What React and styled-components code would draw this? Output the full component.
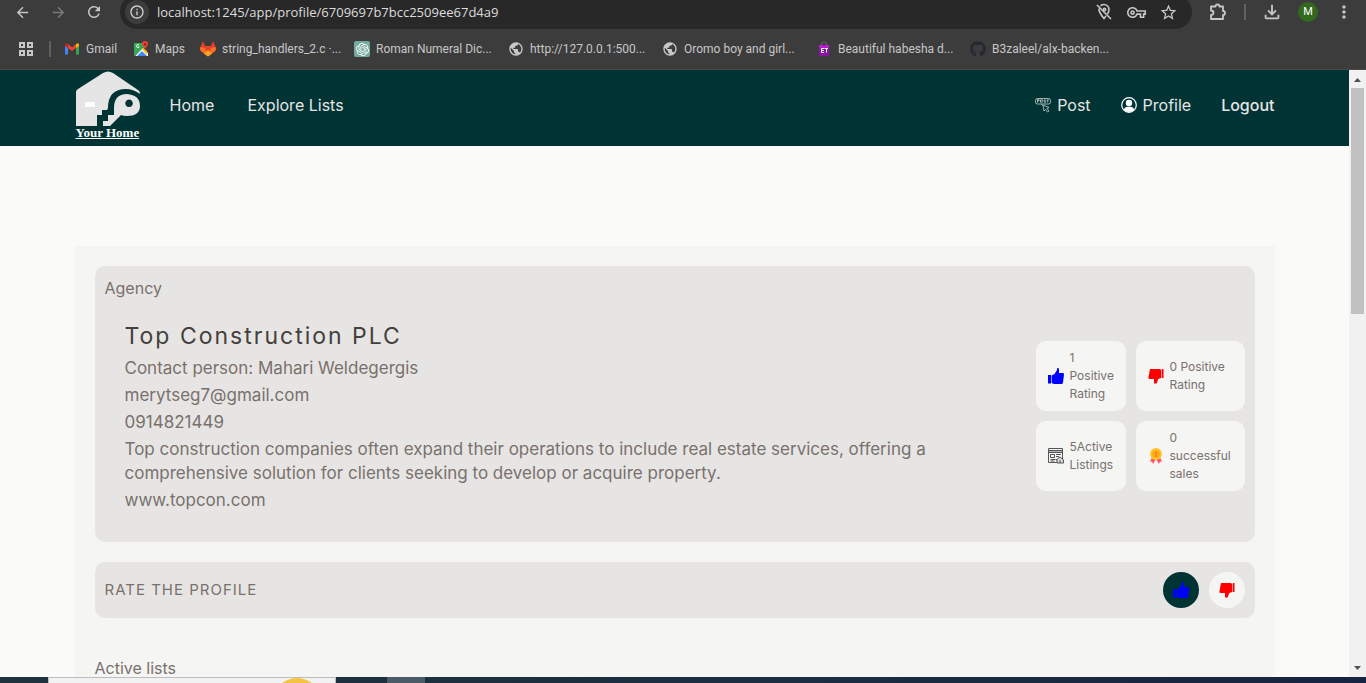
import React from 'react';
import styled, { createGlobalStyle } from 'styled-components';
import { MdArrowBack, MdArrowForward, MdRefresh, MdInfoOutline, MdOutlineVpnKey, MdStarOutline, MdOutlineFileDownload, MdMoreVert, MdPublic } from 'react-icons/md';
import { FaGithub } from 'react-icons/fa';
import { SiOpenai } from 'react-icons/si';

const GlobalStyle = createGlobalStyle`
  * { box-sizing: border-box; }
  body { margin: 0; overflow: hidden; background: #fafaf9; }
  button, input { font: inherit; }
  a { color: inherit; text-decoration: none; }
  h1, h2, p { margin: 0; font-weight: 400; }
  svg { display: block; flex: none; }
`;

const Screen = styled.div`
  height: 100vh;
  display: flex;
  flex-direction: column;
  font-family: Inter, "Liberation Sans", sans-serif;
  font-size: 16px;
  line-height: 24px;
  color: #78716c;
`;

const Chrome = styled.header`
  flex: none;
  background: #3c3c3c;
  color: #c7c7c7;
  border-bottom: 1px solid #4a4a4a;
  font-family: "Open Sans", "Noto Sans", sans-serif;
  font-size: 12px;
`;

const Toolbar = styled.div`
  height: 29px;
  overflow: hidden;
  display: flex;
  align-items: flex-end;
  padding: 0 4px 0 12px;
`;

const IconButton = styled.button`
  height: 34px;
  width: ${(p) => p.$width || 36}px;
  flex: none;
  padding: 0;
  border: 0;
  background: none;
  color: ${(p) => (p.$dim ? '#7c7c7c' : '#c7c7c7')};
  display: flex;
  align-items: center;
  justify-content: center;
`;

const AddressBar = styled.div`
  flex: 1;
  height: 34px;
  display: flex;
  align-items: center;
  margin: 0 8px 0 16px;
  padding: 0 8px 0 5px;
  background: #282828;
  border-radius: 17px;
`;

const SiteInfo = styled.button`
  width: 24px;
  height: 24px;
  padding: 0;
  border: 0;
  border-radius: 50%;
  background: #3c3c3c;
  color: #d0d0d0;
  display: flex;
  align-items: center;
  justify-content: center;
`;

const Address = styled.input`
  flex: 1;
  min-width: 0;
  margin-left: 8px;
  padding: 0;
  border: 0;
  outline: 0;
  background: none;
  color: #dcdcdc;
  font-size: 13px;
`;

const SeparatorSlot = styled.span`
  width: ${(p) => p.$width}px;
  height: 34px;
  display: flex;
  align-items: center;
  justify-content: center;
`;

const Separator = styled.span`
  width: 2px;
  height: 16px;
  background: #606060;
`;

const Avatar = styled.span`
  width: 20px;
  height: 20px;
  border-radius: 50%;
  background: #33691e;
  color: #fff;
  font: 11px/20px Roboto, sans-serif;
  text-align: center;
`;

const Bookmarks = styled.nav`
  height: 40px;
  display: flex;
  align-items: center;
  padding: 0 16px;
  font-family: Roboto, "Open Sans", sans-serif;
`;

const Bookmark = styled.a`
  display: flex;
  align-items: center;
  gap: 6px;
  width: ${(p) => p.$width}px;
  white-space: nowrap;
`;

const Viewport = styled.div`
  flex: 1;
  min-height: 0;
  display: flex;
`;

const Page = styled.div`
  flex: 1;
  min-width: 0;
  overflow: hidden;
  background: #fafaf9;
`;

const Scrollbar = styled.div`
  width: 17px;
  flex: none;
  display: flex;
  flex-direction: column;
  align-items: center;
  background: #f1f1f1;
`;

const ScrollArrow = styled.button`
  width: 17px;
  height: 18px;
  padding: 0;
  border: 0;
  background: none;
  display: flex;
  align-items: center;
  justify-content: center;
`;

const Thumb = styled.div`
  width: 13px;
  flex: 226;
  background: #c1c1c1;
`;

const Track = styled.div`
  flex: 345;
`;

const SiteHeader = styled.header`
  background: #003333;
  color: #e7e5e4;
`;

const Container = styled.div`
  max-width: 1200px;
  margin: 0 auto;
`;

const NavRow = styled(Container)`
  height: 76px;
  display: flex;
  align-items: center;
  gap: 30px;
  padding-bottom: 6px;
`;

const NavLink = styled.a`
  display: flex;
  align-items: center;
  gap: 6px;
  min-width: 48px;
  margin-left: ${(p) => (p.$push ? 'auto' : '0')};
`;

const Logo = styled.a`
  width: 65px;
  padding-left: 1px;
  font: bold 13px/13px "Liberation Serif", serif;
  text-decoration: underline;
  color: #fff;
  white-space: nowrap;
`;

const Logout = styled.button`
  padding: 0;
  border: 0;
  background: none;
  color: inherit;
  font-weight: 500;
`;

const Profile = styled(Container).attrs({ as: 'main' })`
  margin-top: 100px;
  padding: 20px;
  min-height: 900px;
  background: #f5f5f4;
`;

const Card = styled.section`
  margin-bottom: 20px;
  padding: 10px;
  border-radius: 10px;
  background: #e7e5e4;
`;

const AgencyBody = styled.div`
  display: flex;
  align-items: center;
`;

const Details = styled.div`
  flex: 1;
  display: flex;
  flex-direction: column;
  gap: 3px;
  padding: 20px;
  font-size: 17px;
`;

const Title = styled.h1`
  font-size: 23px;
  line-height: 33px;
  letter-spacing: 2px;
  color: #44403c;
`;

const Description = styled.p`
  max-width: 820px;
`;

const Stats = styled.div`
  display: grid;
  grid-template-columns: 90px 109px;
  grid-auto-rows: 70px;
  gap: 10px;
`;

const Stat = styled.div`
  display: flex;
  align-items: center;
  gap: 6px;
  padding-left: 12px;
  border-radius: 10px;
  background: #f5f5f4;
  font-size: 12px;
  line-height: 18px;
`;

const StatLine = styled.span`
  display: block;
  white-space: nowrap;
`;

const RateCard = styled(Card)`
  display: flex;
  align-items: center;
  gap: 10px;
`;

const RateTitle = styled.h2`
  flex: 1;
  font-size: 15px;
  letter-spacing: 1px;
`;

const RateButton = styled.button`
  width: 36px;
  height: 36px;
  padding: 0;
  border: 0;
  border-radius: 50%;
  background: ${(p) => (p.$active ? '#003333' : '#f5f5f4')};
  display: flex;
  align-items: center;
  justify-content: center;
`;

const ListHeading = styled.h2`
  margin-top: 40px;
  font-size: 16px;
  line-height: 20px;
`;

const Taskbar = styled.footer`
  height: 6px;
  flex: none;
  display: flex;
  padding-left: 48px;
  overflow: hidden;
  background: linear-gradient(90deg, #1e333c, #1b2d40 60%, #172440);
`;

const SearchBox = styled.div`
  width: 288px;
  padding-left: 232px;
  border: 1px solid #bdbdbd;
  border-bottom: 0;
  background: #f2f2f2;
`;

const ActiveTask = styled.div`
  width: 38px;
  margin-left: 51px;
  background: #4c5c66;
`;

const ThumbUp = () => (
  <svg width="16" height="16" viewBox="0 0 16 16" fill="#0000ff">
    <path d="M0 7h3v8.500H0zM3.600 7.500 6.500 6 9 2V.7Q9 0 9.800 0 11 0 11 1.400V5h3.800Q16 5 16 6.400L15 14.500Q14.800 16 13.500 16H6l-2.400-1z" />
  </svg>
);

const ThumbDown = () => (
  <svg width="16" height="16" viewBox="0 0 16 16" fill="#ff0000">
    <path d="M13.800 1h1.700v9h-1.700zM2 1h9.500l1.700.7V10l-3 1-1.500 4.500H6V11H1.500Q.4 11 .4 9.500z" />
  </svg>
);

const Gmail = () => (
  <svg width="16" height="16" viewBox="0 0 16 16">
    <path fill="#4285f4" d="M1 4v9.500h3V7z" /><path fill="#34a853" d="M15 4v9.500h-3V7z" />
    <path fill="#ea4335" d="m4 7 4 3 4-3V3.200L8 6.300 4 3.200z" />
    <path fill="#c5221f" d="M1 4q0-2.200 2-1.500l1 .7V7L1 5z" /><path fill="#fbbc04" d="M15 4q0-2.200-2-1.500l-1 .7V7l3-2z" />
  </svg>
);

const Maps = () => (
  <svg width="16" height="16" viewBox="0 0 16 16">
    <path fill="#34a853" d="M1 2h11v4L1 15z" /><path fill="#fff" d="m2 15 8-8 5 5v3z" />
    <path fill="#4285f4" d="m4 15 5-5 5 5z" /><path fill="#fbbc04" d="m9 8 1-1 4 3v4z" />
    <path stroke="#fff" fill="none" d="M6 4a1.500 1.500 0 1 0 .2 2H5" />
    <path fill="#ea4335" d="M12 0a3 3 0 0 1 3 3c0 2-2.500 3-3 6-.500-3-3-4-3-6a3 3 0 0 1 3-3z" /><circle cx="12" cy="3.300" r="1.100" fill="#811" />
  </svg>
);

const Gitlab = () => (
  <svg width="16" height="16" viewBox="0 0 16 16">
    <path fill="#e24329" d="M3 0 0 7l8 8 8-8-3-7-2 5H5z" />
    <path fill="#fc6d26" d="M.5 6Q-1 9 2 11l6 4.500-3-8Q3 6 .5 6zM15.500 6q1.500 3-1.500 5l-6 4.500 3-8Q13 6 15.500 6z" />
    <path fill="#fca326" d="m4 12.500 4-3.500 4 3.500-4 3z" />
  </svg>
);

const AiTile = styled.span`
  width: 16px;
  height: 16px;
  border-radius: 2px;
  background: #74aa9c;
  color: #fff;
  display: flex;
  align-items: center;
  justify-content: center;
`;

const Bag = () => (
  <svg width="16" height="16" viewBox="0 0 16 16">
    <path fill="none" stroke="#666" d="M5 4q0-3 3-3t3 3" /><path fill="#8e12a8" d="M3 4h10v11H3z" /><path fill="#b51bd0" d="M3 4h10v3H3z" />
    <path stroke="#fff" fill="none" d="M8 7.500H5.500v4H8M5.500 9.500H8M8.500 7.500H12M10.500 7.500v4" />
  </svg>
);

const AppsGrid = () => (
  <svg width="16" height="16" viewBox="0 0 16 16" fill="none" stroke="#c7c7c7" strokeWidth="2">
    <path d="M2 2h4v4H2zM10 2h4v4h-4zM2 10h4v4H2zM10 10h4v4h-4z" />
  </svg>
);

const Puzzle = () => (
  <svg width="18" height="18" viewBox="0 0 18 18" fill="none" stroke="#c7c7c7" strokeWidth="1.800" strokeLinejoin="round">
    <path d="M2 3.500h4.500q0-2 2-2t2 2H14V8q2 0 2 2t-2 2v4H2v-4q2.500 0 2.500-2.200T2 7.500z" />
  </svg>
);

const LocationOff = () => (
  <svg width="18" height="18" viewBox="0 0 18 18" fill="none" stroke="#c7c7c7" strokeWidth="1.600">
    <path d="M2 2l14 14M5.500 2.800Q7 1.500 9 1.500a5 5 0 0 1 5 5q0 2-1.500 4.500M4 5.500Q3.500 9 9 15.500l2-2.500" /><circle cx="9.500" cy="6.500" r="1.200" />
  </svg>
);

const House = () => (
  <svg width="64" height="55" viewBox="0 0 64 55">
    <path fill="#e5e5e5" d="M0 55V21q0-2 2-3L27 2q5-3 10 0l25 17q2 1 2 4-7-5-14-5-18 0-18 19l-1 2h-5v5h-5v11z" />
    <path fill="#e5e5e5" fillRule="evenodd" d="M27 55v-5h5v-6h6v-7q0-14 13-14 13 1 13 12 0 10-13 10-4 0-6-1L34 55zM53 28.500a3.800 3.800 0 1 0 .1 0z" />
    <path fill="#fff" d="M9 31h10v5H9z" />
  </svg>
);

const PostIcon = () => (
  <svg width="16" height="16" viewBox="0 0 16 16" fill="none" stroke="#c4d0d0" strokeWidth=".8">
    <rect x=".5" y="1.500" width="15" height="5.500" rx="2" />
    <path d="M2.500 5.500v-3h1.500v1.500H2.500M5.500 2.800h1.800v2.400H5.500zM10.500 3H9v1h1.500v1.300H9M11.500 3H14M12.700 3v2.500M8 8l1 6 1.500-1.500 2 2.500 1.500-1-2-2.500 2-1zM6.500 7.500 8 8" />
  </svg>
);

const UserIcon = () => (
  <svg width="16" height="16" viewBox="0 0 16 16">
    <circle cx="8" cy="8" r="7.300" fill="none" stroke="#fff" strokeWidth="1.200" /><circle cx="8" cy="6" r="3.200" fill="#fff" />
    <path fill="#fff" d="M2.500 12.500Q4 9.800 6 9.800h4q2 0 3.500 2.700Q11.500 15 8 15t-5.500-2.500z" />
  </svg>
);

const ListingIcon = () => (
  <svg width="16" height="16" viewBox="0 0 16 16" fill="none" stroke="#555" strokeWidth="1">
    <path fill="#b5b5b5" d="M.5 2.500h14v2H.5z" />
    <path d="M.5.500h14v14H.5zM2.500 6.500h4v3h-4zM8 6.500h5M8 8.500h3M2.500 11.500h5M2.500 13h4" />
    <path fill="#ddd" d="m8 12 4-3 3.500 3v3H9v-3zM12 12v3" />
  </svg>
);

const Medal = () => (
  <svg width="16" height="16" viewBox="0 0 16 16">
    <path fill="#ff5266" d="m4 9-2 5 2-.5L5 16l3-5zM12 9l2 5-2-.5-1 2.500-3-5z" />
    <circle cx="8" cy="6" r="6" fill="#ffc52d" /><circle cx="8" cy="6" r="4" fill="#ffad16" /><path fill="#ed8210" d="M7 4l1.500-1v6H7.200V5z" />
  </svg>
);

const ArrowGlyph = ({ down }) => (
  <svg width="9" height="5" viewBox="0 0 9 5" fill="#505050"><path d={down ? 'M1 0h7L4.500 4z' : 'M1 5h7L4.500 1z'} /></svg>
);

const bookmarks = [
  ['Gmail', 69, <Gmail />],
  ['Maps', 67, <Maps />],
  ['string_handlers_2.c ·...', 154, <Gitlab />],
  ['Roman Numeral Dic...', 154, <AiTile><SiOpenai size={13} /></AiTile>],
  ['http://127.0.0.1:500...', 154, <MdPublic size={16} />],
  ['Oromo boy and girl...', 154, <MdPublic size={16} />],
  ['Beautiful habesha d...', 154, <Bag />],
  ['B3zaleel/alx-backen...', 154, <FaGithub size={16} color="#24292f" />],
];

const stats = [
  [<ThumbUp />, ['1', 'Positive', 'Rating']],
  [<ThumbDown />, ['0 Positive', 'Rating']],
  [<ListingIcon />, ['5Active', 'Listings']],
  [<Medal />, ['0', 'successful', 'sales']],
];

export default function App() {
  return (
    <Screen>
      <GlobalStyle />
      <Chrome>
        <Toolbar>
          <IconButton aria-label="Back" $width={20}><MdArrowBack size={17} /></IconButton>
          <IconButton aria-label="Forward" $width={52} $dim><MdArrowForward size={17} /></IconButton>
          <IconButton aria-label="Reload" $width={20}><MdRefresh size={18} /></IconButton>
          <AddressBar>
            <SiteInfo aria-label="Site information"><MdInfoOutline size={16} /></SiteInfo>
            <Address aria-label="Address" defaultValue="localhost:1245/app/profile/6709697b7bcc2509ee67d4a9" />
            <IconButton aria-label="Location blocked" $width={32}><LocationOff /></IconButton>
            <IconButton aria-label="Passwords" $width={32}><MdOutlineVpnKey size={19} /></IconButton>
            <IconButton aria-label="Bookmark" $width={32}><MdStarOutline size={19} /></IconButton>
          </AddressBar>
          <IconButton aria-label="Extensions"><Puzzle /></IconButton>
          <SeparatorSlot $width={18}><Separator /></SeparatorSlot>
          <IconButton aria-label="Downloads"><MdOutlineFileDownload size={22} /></IconButton>
          <IconButton aria-label="Account"><Avatar>M</Avatar></IconButton>
          <IconButton aria-label="Menu"><MdMoreVert size={20} /></IconButton>
        </Toolbar>
        <Bookmarks>
          <IconButton aria-label="Apps" $width={20}><AppsGrid /></IconButton>
          <SeparatorSlot $width={28}><Separator /></SeparatorSlot>
          {bookmarks.map(([label, width, icon]) => (
            <Bookmark key={label} href="#" $width={width}>{icon}{label}</Bookmark>
          ))}
        </Bookmarks>
      </Chrome>
      <Viewport>
        <Page>
          <SiteHeader>
            <NavRow as="nav">
              <Logo href="#"><House />Your Home</Logo>
              <NavLink href="#">Home</NavLink>
              <NavLink href="#">Explore Lists</NavLink>
              <NavLink href="#" $push><PostIcon />Post</NavLink>
              <NavLink href="#"><UserIcon />Profile</NavLink>
              <Logout>Logout</Logout>
            </NavRow>
          </SiteHeader>
          <Profile>
            <Card>
              <p>Agency</p>
              <AgencyBody>
                <Details>
                  <Title>Top Construction PLC</Title>
                  <p>Contact person: Mahari Weldegergis</p>
                  <p>merytseg7@gmail.com</p>
                  <p>0914821449</p>
                  <Description>Top construction companies often expand their operations to include real estate services, offering a comprehensive solution for clients seeking to develop or acquire property.</Description>
                  <p>www.topcon.com</p>
                </Details>
                <Stats>
                  {stats.map(([icon, lines]) => (
                    <Stat key={lines.join()}>
                      {icon}
                      <div>{lines.map((line) => <StatLine key={line}>{line}</StatLine>)}</div>
                    </Stat>
                  ))}
                </Stats>
              </AgencyBody>
            </Card>
            <RateCard>
              <RateTitle>RATE THE PROFILE</RateTitle>
              <RateButton aria-label="Rate up" $active><ThumbUp /></RateButton>
              <RateButton aria-label="Rate down"><ThumbDown /></RateButton>
            </RateCard>
            <ListHeading>Active lists</ListHeading>
          </Profile>
        </Page>
        <Scrollbar>
          <ScrollArrow aria-label="Scroll up"><ArrowGlyph /></ScrollArrow>
          <Thumb />
          <Track />
          <ScrollArrow aria-label="Scroll down"><ArrowGlyph down /></ScrollArrow>
        </Scrollbar>
      </Viewport>
      <Taskbar>
        <SearchBox>
          <svg width="32" height="5" viewBox="0 0 32 5"><path fill="#f4c542" d="M1 5Q16-5 31 5z" /></svg>
        </SearchBox>
        <ActiveTask />
      </Taskbar>
    </Screen>
  );
}
